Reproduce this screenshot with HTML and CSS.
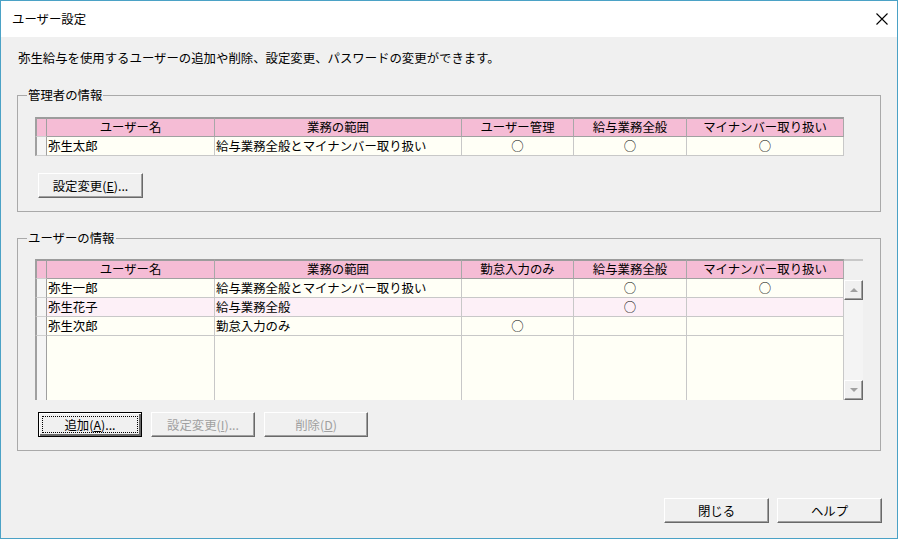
FILE: index.html
```html
<!DOCTYPE html>
<html lang="ja">
<head>
<meta charset="utf-8">
<title>ユーザー設定</title>
<link rel="stylesheet" href="styles.css">
</head>
<body>
<div class="window">
  <div class="titlebar">
    <span class="title">ユーザー設定</span>
    <svg class="close" viewBox="0 0 12 12" width="12" height="12"><path d="M0.5 0.5 L11.5 11.5 M11.5 0.5 L0.5 11.5" stroke="#000" stroke-width="1.1" fill="none"/></svg>
  </div>
  <div class="content">
    <p class="desc">弥生給与を使用するユーザーの追加や削除、設定変更、パスワードの変更ができます。</p>

    <fieldset class="group g1">
      <legend>管理者の情報</legend>
      <div class="gbody">
        <div class="tbl">
          <div class="c h s"></div>
          <div class="c h">ユーザー名</div>
          <div class="c h">業務の範囲</div>
          <div class="c h">ユーザー管理</div>
          <div class="c h">給与業務全般</div>
          <div class="c h">マイナンバー取り扱い</div>

          <div class="c s"></div>
          <div class="c">弥生太郎</div>
          <div class="c">給与業務全般とマイナンバー取り扱い</div>
          <div class="c m">○</div>
          <div class="c m">○</div>
          <div class="c m">○</div>
        </div>
        <div class="btnrow">
          <button class="btn">設定変更(<u>E</u>)...</button>
        </div>
      </div>
    </fieldset>

    <fieldset class="group g2">
      <legend>ユーザーの情報</legend>
      <div class="gbody">
        <div class="tblwrap">
          <div class="tbl tbl2">
            <div class="c h s"></div>
            <div class="c h">ユーザー名</div>
            <div class="c h">業務の範囲</div>
            <div class="c h">勤怠入力のみ</div>
            <div class="c h">給与業務全般</div>
            <div class="c h">マイナンバー取り扱い</div>

            <div class="c s"></div>
            <div class="c">弥生一郎</div>
            <div class="c">給与業務全般とマイナンバー取り扱い</div>
            <div class="c m"></div>
            <div class="c m">○</div>
            <div class="c m">○</div>

            <div class="c s"></div>
            <div class="c pk">弥生花子</div>
            <div class="c pk">給与業務全般</div>
            <div class="c pk m"></div>
            <div class="c pk m">○</div>
            <div class="c pk m"></div>

            <div class="c s"></div>
            <div class="c">弥生次郎</div>
            <div class="c">勤怠入力のみ</div>
            <div class="c m">○</div>
            <div class="c m"></div>
            <div class="c m"></div>

            <div class="c s f"></div>
            <div class="c f"></div>
            <div class="c f"></div>
            <div class="c f"></div>
            <div class="c f"></div>
            <div class="c f"></div>
          </div>
          <div class="vscroll">
            <div class="vs-head"></div>
            <div class="vs-btn"><span class="tri up"></span></div>
            <div class="vs-track"></div>
            <div class="vs-btn"><span class="tri down"></span></div>
          </div>
        </div>
        <div class="btnrow">
          <button class="btn focus"><span class="fr">追加(<u>A</u>)...</span></button>
          <button class="btn dis">設定変更(<u>I</u>)...</button>
          <button class="btn dis">削除(<u>D</u>)</button>
        </div>
      </div>
    </fieldset>

    <div class="footer">
      <button class="btn">閉じる</button>
      <button class="btn">ヘルプ</button>
    </div>
  </div>
</div>
</body>
</html>
```

FILE: styles.css
```css
* { box-sizing: border-box; }
html, body { margin: 0; padding: 0; background: #fff; }
body {
  font-family: "Noto Sans CJK JP", "Noto Sans", sans-serif;
  font-size: 12.4px;
  color: #000;
}
.window {
  width: 898px;
  height: 539px;
  border: 1px solid #4ba2c6;
  display: flex;
  flex-direction: column;
  background: #f0f0f0;
}
.titlebar {
  height: 36px;
  background: #fff;
  display: flex;
  align-items: center;
  justify-content: space-between;
  padding: 0 9px 0 11px;
}
.title { line-height: 16px; }
.close { display: block; }
.content {
  flex: 1;
  display: flex;
  flex-direction: column;
  padding: 13px 15px 15px 16px;
}
.desc { margin: 0 0 0 1px; line-height: 16px; }

.group {
  margin: 21px 0 0;
  padding: 0 0 13px;
  width: 864px;
  min-width: 0;
  border: 1px solid #a9a9a9;
}
.g2 { margin-top: 18px; }
.group legend {
  margin-left: 9px;
  padding: 0 1px;
  line-height: 16px;
}
.gbody { padding: 14px 17px 0; }
.g2 .gbody { padding-top: 13px; }

.tbl {
  display: grid;
  grid-template-columns: 12px 168px 247px 112px 113px 157px;
  grid-template-rows: 20px 19px;
  width: 809px;
}
.tbl2 { grid-template-rows: 20px 19px 19px 19px 64px; }
.c {
  background: #fffff6;
  border-right: 1px solid #c8c8c8;
  border-bottom: 1px solid #c8c8c8;
  padding-left: 1px;
  white-space: nowrap;
  overflow: hidden;
  line-height: 18px;
}
.c.pk { background: #fdf0f7; }
.c.m { text-align: center; padding-left: 0; }
.c.h {
  background: #f5bcd5;
  border-top: 2px solid #9c9c9c;
  border-right-color: #a8a8a8;
  border-bottom-color: #a0a0a0;
  text-align: center;
  line-height: 17px;
  padding-left: 0;
}
.c.s {
  background: #f5f5f5;
  border-left: 2px solid #a0a0a0;
  border-right: 1px solid #a0a0a0;
  border-bottom-color: #d0d0d0;
}
.c.h.s { background: #f5bcd5; }
.c.f { border-bottom: none; }

.tblwrap { display: flex; }
.vscroll {
  width: 19px;
  display: flex;
  flex-direction: column;
  background: #f4f4f4;
}
.vs-head {
  height: 21px;
  border-top: 2px solid #c8c8c8;
  background: #f0f0f0;
}
.vs-track { flex: 1; }
.vs-btn {
  height: 20px;
  background: #f0f0f0;
  border: 1px solid;
  border-color: #fff #696969 #696969 #fff;
  box-shadow: inset -1px -1px 0 #a0a0a0;
  display: flex;
  align-items: center;
  justify-content: center;
}
.tri { width: 0; height: 0; border-left: 4px solid transparent; border-right: 4px solid transparent; }
.tri.up { border-bottom: 4px solid #a0a0a0; }
.tri.down { border-top: 4px solid #a0a0a0; }

.btnrow { display: flex; gap: 9px; margin-top: 17px; margin-left: 3px; }
.g2 .btnrow { margin-top: 12px; }
.g2 .btn { width: 104px; }
.btn {
  width: 105px;
  height: 25px;
  padding: 0;
  font: inherit;
  color: #000;
  background: #f0f0f0;
  border: 1px solid;
  border-color: #fff #696969 #696969 #fff;
  box-shadow: inset -1px -1px 0 #a0a0a0;
  display: flex;
  align-items: center;
  justify-content: center;
}
.btn u { text-decoration: underline; text-underline-offset: 1px; }
.btn.focus {
  border: 1px solid #000;
  box-shadow: inset 1px 1px 0 #fff, inset -2px -2px 0 #696969;
  padding: 3px;
}
.btn.focus .fr {
  flex: 1;
  align-self: stretch;
  display: flex;
  align-items: center;
  justify-content: center;
  outline: 1px dotted #000;
  outline-offset: -1px;
}
.btn.dis { color: #a0a0a0; }

.footer {
  margin-top: auto;
  display: flex;
  justify-content: flex-end;
  gap: 8px;
}
```
